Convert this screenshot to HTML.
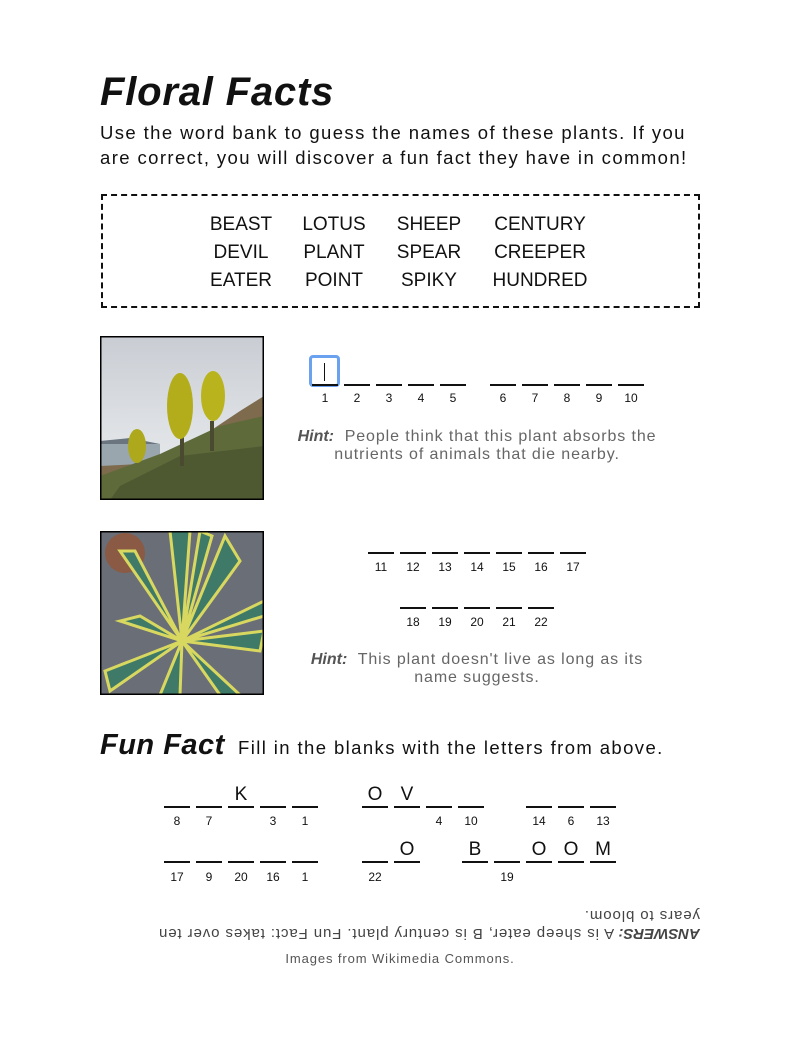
<!DOCTYPE html>
<html><head><meta charset="utf-8">
<style>
*{margin:0;padding:0;box-sizing:border-box}
body{width:800px;height:1038px;background:#fff;position:relative;font-family:"Liberation Sans",sans-serif;color:#111;overflow:hidden}
.a{position:absolute;white-space:nowrap}
.b{position:absolute;width:26px;height:2px;background:#111}
.n{position:absolute;width:26px;text-align:center;font-size:12px;color:#111}
.l{position:absolute;width:26px;text-align:center;font-size:19px;color:#111}
.hint{position:absolute;text-align:center;font-size:16px;color:#666;line-height:18px;letter-spacing:0.9px}
.hint b{font-style:italic;font-weight:900;color:#555;letter-spacing:0}
</style></head><body>
<div class="a" style="left:100px;top:70px;font-size:40px;font-weight:900;font-style:italic;letter-spacing:0.8px">Floral Facts</div>
<div class="a" style="left:100px;top:120px;font-size:18.5px;line-height:25px;letter-spacing:1.4px">Use the word bank to guess the names of these plants. If you<br>are correct, you will discover a fun fact they have in common!</div>
<div class="a" style="left:101px;top:194px;width:599px;height:114px;border:2px dashed #111"></div>
<div class="a" style="left:200px;top:211px;font-size:19px;line-height:28px;text-align:center;width:82px">BEAST<br>DEVIL<br>EATER</div>
<div class="a" style="left:293px;top:211px;font-size:19px;line-height:28px;text-align:center;width:82px">LOTUS<br>PLANT<br>POINT</div>
<div class="a" style="left:388px;top:211px;font-size:19px;line-height:28px;text-align:center;width:82px">SHEEP<br>SPEAR<br>SPIKY</div>
<div class="a" style="left:485px;top:211px;font-size:19px;line-height:28px;text-align:center;width:110px">CENTURY<br>CREEPER<br>HUNDRED</div>

<svg class="a" style="left:100px;top:336px" width="164" height="164" viewBox="0 0 164 164">
<defs><linearGradient id="sky" x1="0" y1="0" x2="0" y2="1"><stop offset="0" stop-color="#c9cdd3"/><stop offset="1" stop-color="#eef0f2"/></linearGradient></defs>
<rect width="164" height="164" fill="url(#sky)"/>
<path d="M0 105 L30 102 L60 108 L0 110Z" fill="#6a7580"/>
<rect y="108" width="60" height="25" fill="#9aa6ae"/>
<path d="M0 130 L40 128 L60 120 L110 95 L140 75 L164 60 L164 164 L0 164Z" fill="#7e6a4c"/>
<path d="M0 140 L60 118 L120 90 L164 80 L164 164 L0 164Z" fill="#5e6a3a"/>
<path d="M20 150 L80 120 L164 110 L164 164 L10 164Z" fill="#4b5530" opacity=".8"/>
<rect x="80" y="90" width="4" height="40" fill="#4a4a30"/><rect x="110" y="85" width="4" height="30" fill="#4a4a30"/>
<ellipse cx="80" cy="70" rx="13" ry="33" fill="#b3ad1c"/>
<ellipse cx="113" cy="60" rx="12" ry="25" fill="#b9b41e"/>
<ellipse cx="37" cy="110" rx="9" ry="17" fill="#aea81c"/>
<rect x="0" y="0" width="164" height="164" fill="none" stroke="#000" stroke-width="3"/>
</svg>
<svg class="a" style="left:100px;top:531px" width="164" height="164" viewBox="0 0 164 164">
<rect width="164" height="164" fill="#6a6e76"/>
<circle cx="25" cy="22" r="20" fill="#8a5a44"/>
<path d="M82 110 L20 20 L35 20 Z M82 110 L70 0 L90 0Z M82 110 L125 5 L140 30Z M82 110 L160 120 L164 100Z M82 110 L5 140 L10 160Z M82 110 L20 90 L40 85Z M82 110 L60 164 L80 164Z M82 110 L140 164 L120 164Z M82 110 L164 70 L164 85Z M82 110 L100 0 L112 5Z" fill="#3f7a68" stroke="#d8d860" stroke-width="3"/>
<rect x="0" y="0" width="164" height="164" fill="none" stroke="#000" stroke-width="3"/>
</svg>

<div class="a" style="left:309px;top:355px;width:31px;height:32px;border:3px solid #6aa2f0;border-radius:4px"></div>
<div class="a" style="left:324px;top:363px;width:1px;height:18px;background:#111"></div>
<div class="b" style="left:312px;top:384px"></div><div class="b" style="left:344px;top:384px"></div><div class="b" style="left:376px;top:384px"></div><div class="b" style="left:408px;top:384px"></div><div class="b" style="left:440px;top:384px"></div>
<div class="b" style="left:490px;top:384px"></div><div class="b" style="left:522px;top:384px"></div><div class="b" style="left:554px;top:384px"></div><div class="b" style="left:586px;top:384px"></div><div class="b" style="left:618px;top:384px"></div>
<div class="n" style="left:312px;top:391px">1</div><div class="n" style="left:344px;top:391px">2</div><div class="n" style="left:376px;top:391px">3</div><div class="n" style="left:408px;top:391px">4</div><div class="n" style="left:440px;top:391px">5</div>
<div class="n" style="left:490px;top:391px">6</div><div class="n" style="left:522px;top:391px">7</div><div class="n" style="left:554px;top:391px">8</div><div class="n" style="left:586px;top:391px">9</div><div class="n" style="left:618px;top:391px">10</div>
<div class="hint" style="left:260px;top:428px;width:434px"><b>Hint:</b>&nbsp; People think that this plant absorbs the<br>nutrients of animals that die nearby.</div>

<div class="b" style="left:368px;top:552px"></div><div class="b" style="left:400px;top:552px"></div><div class="b" style="left:432px;top:552px"></div><div class="b" style="left:464px;top:552px"></div><div class="b" style="left:496px;top:552px"></div><div class="b" style="left:528px;top:552px"></div><div class="b" style="left:560px;top:552px"></div>
<div class="n" style="left:368px;top:560px">11</div><div class="n" style="left:400px;top:560px">12</div><div class="n" style="left:432px;top:560px">13</div><div class="n" style="left:464px;top:560px">14</div><div class="n" style="left:496px;top:560px">15</div><div class="n" style="left:528px;top:560px">16</div><div class="n" style="left:560px;top:560px">17</div>
<div class="b" style="left:400px;top:607px"></div><div class="b" style="left:432px;top:607px"></div><div class="b" style="left:464px;top:607px"></div><div class="b" style="left:496px;top:607px"></div><div class="b" style="left:528px;top:607px"></div>
<div class="n" style="left:400px;top:615px">18</div><div class="n" style="left:432px;top:615px">19</div><div class="n" style="left:464px;top:615px">20</div><div class="n" style="left:496px;top:615px">21</div><div class="n" style="left:528px;top:615px">22</div>
<div class="hint" style="left:260px;top:651px;width:434px"><b>Hint:</b>&nbsp; This plant doesn't live as long as its<br>name suggests.</div>

<div class="a" style="left:100px;top:729px;font-size:29px;font-weight:900;font-style:italic;letter-spacing:0.5px">Fun Fact</div>
<div class="a" style="left:238px;top:737px;font-size:18.5px;letter-spacing:1.4px">Fill in the blanks with the letters from above.</div>

<div class="b" style="left:164px;top:806px"></div><div class="b" style="left:196px;top:806px"></div><div class="b" style="left:228px;top:806px"></div><div class="b" style="left:260px;top:806px"></div><div class="b" style="left:292px;top:806px"></div>
<div class="b" style="left:362px;top:806px"></div><div class="b" style="left:394px;top:806px"></div><div class="b" style="left:426px;top:806px"></div><div class="b" style="left:458px;top:806px"></div>
<div class="b" style="left:526px;top:806px"></div><div class="b" style="left:558px;top:806px"></div><div class="b" style="left:590px;top:806px"></div>
<div class="l" style="left:228px;top:784px">K</div><div class="l" style="left:362px;top:784px">O</div><div class="l" style="left:394px;top:784px">V</div>
<div class="n" style="left:164px;top:814px">8</div><div class="n" style="left:196px;top:814px">7</div><div class="n" style="left:260px;top:814px">3</div><div class="n" style="left:292px;top:814px">1</div>
<div class="n" style="left:426px;top:814px">4</div><div class="n" style="left:458px;top:814px">10</div>
<div class="n" style="left:526px;top:814px">14</div><div class="n" style="left:558px;top:814px">6</div><div class="n" style="left:590px;top:814px">13</div>

<div class="b" style="left:164px;top:861px"></div><div class="b" style="left:196px;top:861px"></div><div class="b" style="left:228px;top:861px"></div><div class="b" style="left:260px;top:861px"></div><div class="b" style="left:292px;top:861px"></div>
<div class="b" style="left:362px;top:861px"></div><div class="b" style="left:394px;top:861px"></div>
<div class="b" style="left:462px;top:861px"></div><div class="b" style="left:494px;top:861px"></div><div class="b" style="left:526px;top:861px"></div><div class="b" style="left:558px;top:861px"></div><div class="b" style="left:590px;top:861px"></div>
<div class="l" style="left:394px;top:839px">O</div><div class="l" style="left:462px;top:839px">B</div><div class="l" style="left:526px;top:839px">O</div><div class="l" style="left:558px;top:839px">O</div><div class="l" style="left:590px;top:839px">M</div>
<div class="n" style="left:164px;top:870px">17</div><div class="n" style="left:196px;top:870px">9</div><div class="n" style="left:228px;top:870px">20</div><div class="n" style="left:260px;top:870px">16</div><div class="n" style="left:292px;top:870px">1</div>
<div class="n" style="left:362px;top:870px">22</div><div class="n" style="left:494px;top:870px">19</div>

<div class="a" style="left:100px;top:902px;width:600px;height:40px;transform:rotate(180deg);font-size:15px;line-height:18px;color:#444;text-align:left;letter-spacing:0.9px"><b style="font-style:italic;font-weight:900;letter-spacing:0">ANSWERS:</b> A is sheep eater, B is century plant. Fun Fact: takes over ten<br>years to bloom.</div>
<div class="a" style="left:0;top:951px;width:800px;text-align:center;font-size:13px;color:#555;letter-spacing:0.9px">Images from Wikimedia Commons.</div>
</body></html>
